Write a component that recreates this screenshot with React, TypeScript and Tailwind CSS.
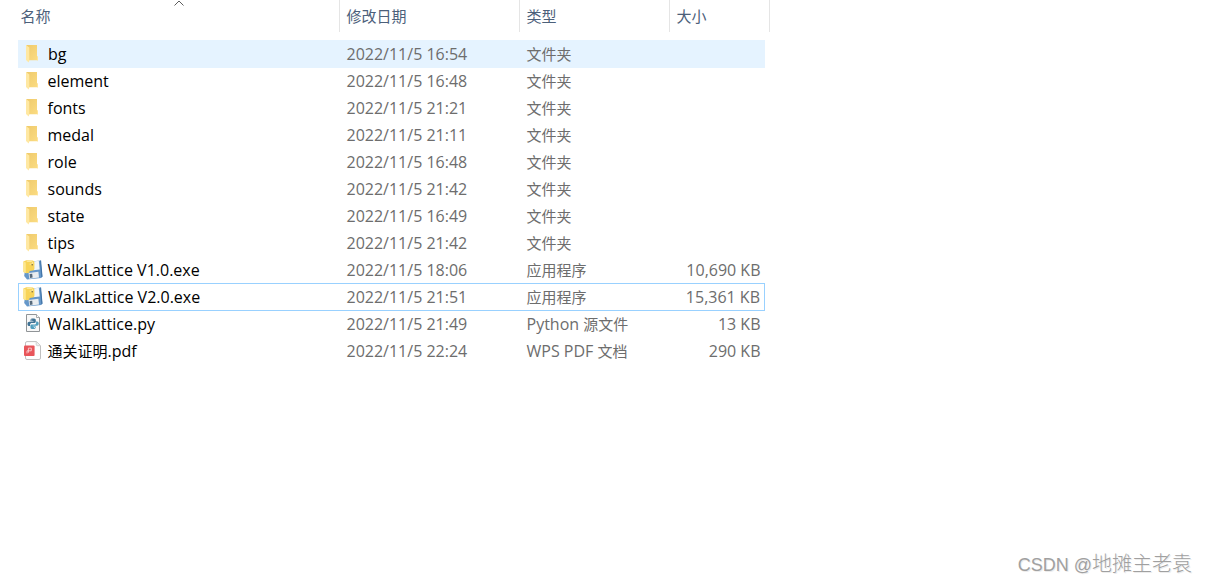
import type { ReactNode } from "react";

type Kind = "folder" | "exe" | "py" | "pdf";
type Entry = {
  name: string;
  date: string;
  type: string;
  size?: string;
  kind: Kind;
  state?: "hover" | "focus";
};

const entries: Entry[] = [
  { name: "bg", date: "2022/11/5 16:54", type: "文件夹", kind: "folder", state: "hover" },
  { name: "element", date: "2022/11/5 16:48", type: "文件夹", kind: "folder" },
  { name: "fonts", date: "2022/11/5 21:21", type: "文件夹", kind: "folder" },
  { name: "medal", date: "2022/11/5 21:11", type: "文件夹", kind: "folder" },
  { name: "role", date: "2022/11/5 16:48", type: "文件夹", kind: "folder" },
  { name: "sounds", date: "2022/11/5 21:42", type: "文件夹", kind: "folder" },
  { name: "state", date: "2022/11/5 16:49", type: "文件夹", kind: "folder" },
  { name: "tips", date: "2022/11/5 21:42", type: "文件夹", kind: "folder" },
  { name: "WalkLattice V1.0.exe", date: "2022/11/5 18:06", type: "应用程序", size: "10,690 KB", kind: "exe" },
  { name: "WalkLattice V2.0.exe", date: "2022/11/5 21:51", type: "应用程序", size: "15,361 KB", kind: "exe", state: "focus" },
  { name: "WalkLattice.py", date: "2022/11/5 21:49", type: "Python 源文件", size: "13 KB", kind: "py" },
  { name: "通关证明.pdf", date: "2022/11/5 22:24", type: "WPS PDF 文档", size: "290 KB", kind: "pdf" },
];

function FolderIcon() {
  return (
    <svg viewBox="0 0 20 20" className="size-5" aria-hidden="true">
      <defs>
        <linearGradient id="folder-body" x1="0" y1="0" x2="1" y2="1">
          <stop offset="0" stopColor="#efca6c" />
          <stop offset="1" stopColor="#fbdc82" />
        </linearGradient>
      </defs>
      <path d="M3.3 1H14v11.2l1 .8v3.2H5.5z" fill="url(#folder-body)" />
      <path d="M3 1l3.3 2.4v13.2l-.6 1.8L3 16z" fill="#ffe8a2" />
      <path d="M14 12l1 .9v3.3h-1z" fill="#ffe49a" />
    </svg>
  );
}

function ExeIcon() {
  return (
    <svg viewBox="0 0 20 20" className="size-5" aria-hidden="true">
      <path d="M3 2L17.6.4l1.8 16.2-1.2 1.3L4 19.4 1.2 16z" fill="#6597c9" />
      <path d="M17 .5l1.1.1 1.4 15.8-1.2 1.2z" fill="#4375a8" />
      <path d="M10 1.4l5.8-.7.9 8.8-6.4.8z" fill="#eff5fa" />
      <path d="M5.6 13l9.8-1.2.6 5.7-9.7 1.2z" fill="#e9edf0" />
      <path d="M6.6 14.1l2.6-.3.4 3.8-2.6.3z" fill="#56697a" />
      <path d="M.4 1.6L3.4.3l6.4.2q1.6.4 1.6 2v6.2q0 1.6-1.6 1.9l-3.2.3-.2 1.8-3 .6L.4 12z" fill="#f8d458" />
      <path d="M.4 1.6l2.4 1v10.6L.4 12z" fill="#fde78f" />
      <path d="M3.8 1.4l4.6.1q1.3.2 1.3 1.4v1.2H6.6" fill="none" stroke="#fdeca6" strokeWidth=".9" />
      <circle cx="9.2" cy="4.8" r=".8" fill="#77693a" />
    </svg>
  );
}

function PythonIcon() {
  return (
    <svg viewBox="0 0 20 20" className="size-5" aria-hidden="true">
      <path d="M3.5 .5h10l3 3v14h-13z" fill="#f8f8f8" stroke="#909497" />
      <path d="M13.5 .5v3h3" fill="#fff" stroke="#909497" strokeWidth=".8" />
      <path
        d="M10 4.6c-2 0-2.5.7-2.5 1.5v1.2h3v.5H6.3c-1.1 0-1.8.8-1.8 2.2s.6 2.1 1.6 2.1h1v-1.4c0-1 .8-1.7 1.8-1.7h2.6c.8 0 1.3-.6 1.3-1.4V6.1c0-1-.9-1.5-2.8-1.5z"
        fill="#3f7294"
      />
      <path
        d="M10.2 15c2 0 2.5-.7 2.5-1.5v-1.2h-3v-.5h4.2c1.1 0 1.8-.8 1.8-2.2s-.6-2.1-1.6-2.1h-1v1.4c0 1-.8 1.7-1.8 1.7H8.7c-.8 0-1.3.6-1.3 1.4v1.5c0 1 .9 1.5 2.8 1.5z"
        fill="#4f9dbd"
      />
      <circle cx="8.8" cy="6.1" r=".5" fill="#fff" />
      <circle cx="11.4" cy="13.5" r=".5" fill="#fff" />
    </svg>
  );
}

function PdfIcon() {
  return (
    <svg viewBox="0 0 20 20" className="size-5" aria-hidden="true">
      <path d="M4 .6h9.4l4.1 4.1V17q0 1.5-1.5 1.5H4q-1.5 0-1.5-1.5V2.1Q2.5.6 4 .6z" fill="#fefefe" stroke="#b9b9b9" strokeWidth=".9" />
      <path d="M13.2.8v2.6q0 1.3 1.3 1.3h2.8" fill="#eee" stroke="#c4c4c4" strokeWidth=".7" />
      <rect x="1" y="4.6" width="10.6" height="10.4" rx="1" fill="#e8555a" />
      <path d="M4 12.4v-2.6h4.3V7.1H5.4v4.6" fill="none" stroke="#f9d0d1" strokeWidth=".9" />
    </svg>
  );
}

const icons: Record<Kind, ReactNode> = {
  folder: <FolderIcon />,
  exe: <ExeIcon />,
  py: <PythonIcon />,
  pdf: <PdfIcon />,
};

/** Sets Han characters one pixel smaller than the Latin text around them. */
function Mixed({ text }: { text: string }) {
  return (
    <>
      {text.split(/([\u4e00-\u9fff]+)/).map((part, i) =>
        /[\u4e00-\u9fff]/.test(part) ? (
          <span key={i} className="text-[15px]">{part}</span>
        ) : (
          part
        ),
      )}
    </>
  );
}

function HeaderCell({ label, sorted, span }: { label: string; sorted?: boolean; span?: number }) {
  return (
    <th scope="col" colSpan={span} aria-sort={sorted ? "ascending" : undefined} className="p-0 pb-2 font-normal">
      <button
        type="button"
        className={`relative flex h-8 w-full items-center border-r border-[#e5e5e5] text-left text-[15px] leading-none text-[#4c607a] ${sorted ? "pl-[2px]" : "pl-[7px]"}`}
      >
        {label}
        {sorted && (
          <svg viewBox="0 0 10 6" className="absolute top-0 left-1/2 h-[6px] w-[10px] -translate-x-1/2" aria-hidden="true">
            <path d="M.5 5.5L5 1l4.5 4.5" fill="none" stroke="#5c5c5c" />
          </svg>
        )}
      </button>
    </th>
  );
}

const rowStyle = {
  hover: "border border-[#e5f3ff] bg-[#e5f3ff]",
  focus: "border border-[#99d1ff]",
};

export default function App() {
  return (
    <div className="flex min-h-screen flex-col justify-between bg-white font-['Open_Sans','Noto_Sans_CJK_SC',sans-serif]">
      <main className="overflow-x-auto pl-[18px]">
        <table className="w-[751px] table-fixed border-collapse text-base leading-none">
          <colgroup>
            <col className="w-[321px]" />
            <col className="w-[180px]" />
            <col className="w-[150px]" />
            <col className="w-[95px]" />
            <col className="w-[5px]" />
          </colgroup>
          <thead>
            <tr>
              <HeaderCell label="名称" sorted />
              <HeaderCell label="修改日期" />
              <HeaderCell label="类型" />
              <HeaderCell label="大小" span={2} />
            </tr>
          </thead>
          <tbody className="text-[#6d6d6d]">
            {entries.map((e) => {
              const mark = e.state ? rowStyle[e.state] : "";
              const edge = mark && `${mark} border-x-0`;
              return (
                <tr key={e.name} className="h-[27px]">
                  <td className={`p-0 ${mark} ${mark && "border-r-0"}`}>
                    <span className="flex h-[26px] items-center gap-[5px] pl-[4px] text-black">
                      {icons[e.kind]}
                      <span><Mixed text={e.name} /></span>
                    </span>
                  </td>
                  <td className={`p-0 pl-[7px] ${edge}`}>{e.date}</td>
                  <td className={`p-0 pl-[7px] ${edge}`}><Mixed text={e.type} /></td>
                  <td className={`p-0 pr-[4px] text-right ${mark} ${mark && "border-l-0"}`}>{e.size}</td>
                  <td className="p-0" />
                </tr>
              );
            })}
          </tbody>
        </table>
      </main>
      <footer className="self-end px-[14px] pb-[6px] font-['Liberation_Sans','Noto_Sans_CJK_SC',sans-serif] text-lg leading-6 font-light text-[#a0a0a0] [text-shadow:1px_1px_0_#ececec]">
        CSDN @<span className="text-xl leading-6">地摊主老袁</span>
      </footer>
    </div>
  );
}
